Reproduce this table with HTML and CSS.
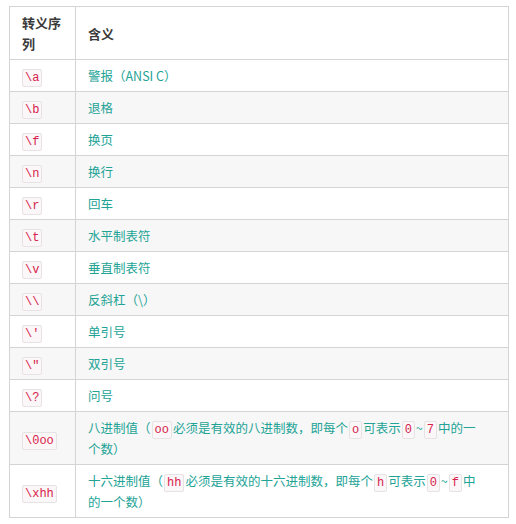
FILE: index.html
```html
<!DOCTYPE html>
<html lang="zh-CN">
<head>
<meta charset="utf-8">
<title>转义序列</title>
<link rel="stylesheet" href="styles.css">
</head>
<body>
<table class="esc-table">
  <colgroup>
    <col class="col-seq">
    <col class="col-desc">
  </colgroup>
  <thead>
    <tr><th>转义序列</th><th>含义</th></tr>
  </thead>
  <tbody>
    <tr><td><code>\a</code></td><td>警报（ANSI C）</td></tr>
    <tr><td><code>\b</code></td><td>退格</td></tr>
    <tr><td><code>\f</code></td><td>换页</td></tr>
    <tr><td><code>\n</code></td><td>换行</td></tr>
    <tr><td><code>\r</code></td><td>回车</td></tr>
    <tr><td><code>\t</code></td><td>水平制表符</td></tr>
    <tr><td><code>\v</code></td><td>垂直制表符</td></tr>
    <tr><td><code>\\</code></td><td>反斜杠（\）</td></tr>
    <tr><td><code>\'</code></td><td>单引号</td></tr>
    <tr><td><code>\"</code></td><td>双引号</td></tr>
    <tr><td><code>\?</code></td><td>问号</td></tr>
    <tr><td><code>\0oo</code></td><td class="long">八进制值（<code>oo</code>必须是有效的八进制数，即每个<code>o</code>可表示<code>0</code>~<code>7</code>中的一<br>个数）</td></tr>
    <tr><td><code>\xhh</code></td><td class="long">十六进制值（<code>hh</code>必须是有效的十六进制数，即每个<code>h</code>可表示<code>0</code>~<code>f</code>中<br>的一个数）</td></tr>
  </tbody>
</table>
</body>
</html>
```
FILE: styles.css
```css
html, body {
  margin: 0;
  padding: 0;
  background: #ffffff;
}

body {
  padding: 6px 0 0 9px;
  font-family: "Noto Sans CJK SC", "Noto Sans", sans-serif;
  font-size: 12px;
}

.esc-table {
  width: 500px;
  border-collapse: collapse;
  table-layout: fixed;
}

.col-seq {
  width: 66px;
}

.esc-table th,
.esc-table td {
  border: 1px solid #d4d4d4;
  padding: 5px 12px;
  line-height: 21px;
  height: 21px;
  text-align: left;
  vertical-align: middle;
}

.esc-table th {
  font-size: 13px;
  font-weight: bold;
  color: #3a3a3a;
  background: #ffffff;
}

.esc-table td {
  font-size: 12.5px;
  color: #22a396;
}

.esc-table td.long {
  white-space: nowrap;
}

.esc-table tbody tr:nth-child(even) td {
  background: #f7f7f7;
}

.esc-table code {
  display: inline;
  font-family: "Liberation Mono", "DejaVu Sans Mono", monospace;
  font-size: 12px;
  line-height: 12px;
  padding: 1px 2px;
  margin: 0 1px;
  color: #d6224c;
  background: #fbf6f7;
  border: 1px solid #e6e3e4;
  border-radius: 2px;
}

.esc-table td:first-child code {
  margin: 0;
}
```
